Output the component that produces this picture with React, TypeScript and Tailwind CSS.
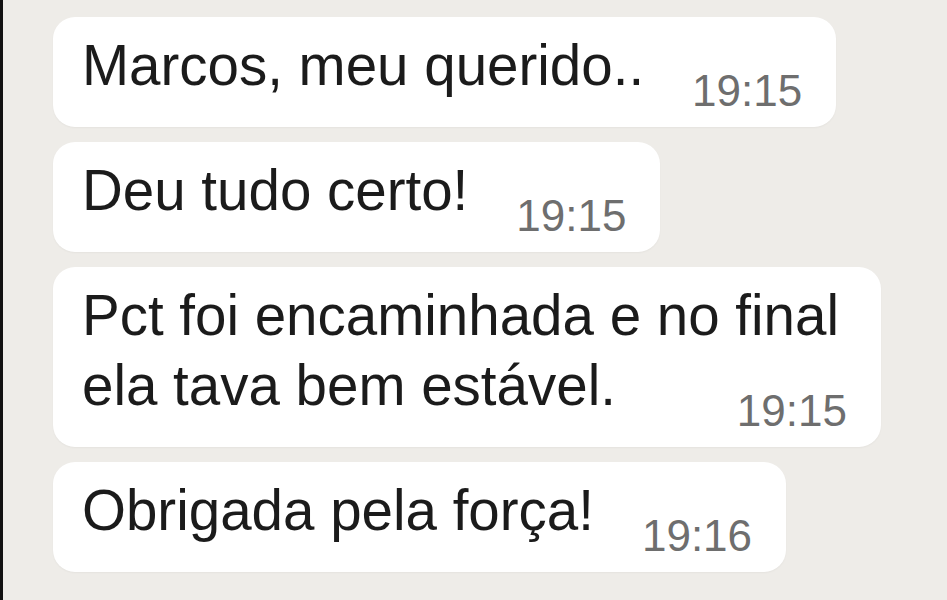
import React from 'react';

interface Message {
  lines: string[];
  time: string;
}

const messages: Message[] = [
  { lines: ['Marcos, meu querido..'], time: '19:15' },
  { lines: ['Deu tudo certo!'], time: '19:15' },
  { lines: ['Pct foi encaminhada e no final', 'ela tava bem estável.'], time: '19:15' },
  { lines: ['Obrigada pela força!'], time: '19:16' },
];

const Time = ({ value }: { value: string }) => (
  <span className="shrink-0 text-[44px] leading-none text-[#6e6e6e]">{value}</span>
);

const Bubble = ({ lines, time }: Message) => {
  const head = lines.slice(0, -1);
  const last = lines[lines.length - 1];

  return (
    <div className="self-start rounded-[22px] bg-white pl-[29px] pr-[34px] pt-[14px] pb-[14px] shadow-[0_1px_2px_rgba(0,0,0,0.04)]">
      {head.map((line, i) => (
        <div key={i} className="pr-[8px] text-[56.5px] leading-[70px] text-[#1b1b1b]">
          {line}
        </div>
      ))}
      <div className="flex items-end justify-between">
        <div className="pb-[12px] text-[56.5px] leading-[70px] text-[#1b1b1b]">{last}</div>
        <div className="ml-[48px]">
          <Time value={time} />
        </div>
      </div>
    </div>
  );
};

export default function App() {
  return (
    <div className="flex h-[600px] w-[947px] overflow-hidden bg-[#eeece8] font-['Liberation_Sans',Arial,sans-serif]">
      <div className="w-[3px] shrink-0 bg-[#111]" />
      <div className="flex flex-1 flex-col gap-[15px] pl-[50px] pt-[17px]">
        {messages.map((m, i) => (
          <Bubble key={i} lines={m.lines} time={m.time} />
        ))}
      </div>
    </div>
  );
}
